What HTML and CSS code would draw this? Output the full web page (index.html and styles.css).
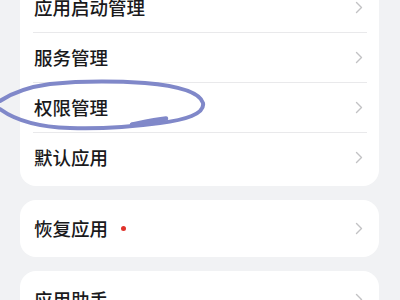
FILE: index.html
```html
<!DOCTYPE html>
<html lang="zh">
<head>
<meta charset="utf-8">
<link rel="stylesheet" href="styles.css">
</head>
<body>
<div class="page">
  <div class="card first">
    <div class="row"><span class="label">应用启动管理</span><svg class="chev" width="8" height="13" viewBox="0 0 8 13"><polyline points="1.5,1.5 6.5,6.5 1.5,11.5" fill="none" stroke="#c2c2c4" stroke-width="1.4" stroke-linecap="round" stroke-linejoin="round"/></svg></div>
    <div class="row"><span class="label">服务管理</span><svg class="chev" width="8" height="13" viewBox="0 0 8 13"><polyline points="1.5,1.5 6.5,6.5 1.5,11.5" fill="none" stroke="#c2c2c4" stroke-width="1.4" stroke-linecap="round" stroke-linejoin="round"/></svg></div>
    <div class="row"><span class="label">权限管理</span><svg class="chev" width="8" height="13" viewBox="0 0 8 13"><polyline points="1.5,1.5 6.5,6.5 1.5,11.5" fill="none" stroke="#c2c2c4" stroke-width="1.4" stroke-linecap="round" stroke-linejoin="round"/></svg></div>
    <div class="row"><span class="label">默认应用</span><svg class="chev" width="8" height="13" viewBox="0 0 8 13"><polyline points="1.5,1.5 6.5,6.5 1.5,11.5" fill="none" stroke="#c2c2c4" stroke-width="1.4" stroke-linecap="round" stroke-linejoin="round"/></svg></div>
  </div>
  <div class="card">
    <div class="row"><span class="label">恢复应用</span><span class="dot"></span><svg class="chev" width="8" height="13" viewBox="0 0 8 13"><polyline points="1.5,1.5 6.5,6.5 1.5,11.5" fill="none" stroke="#c2c2c4" stroke-width="1.4" stroke-linecap="round" stroke-linejoin="round"/></svg></div>
  </div>
  <div class="card">
    <div class="row"><span class="label">应用助手</span><svg class="chev" width="8" height="13" viewBox="0 0 8 13"><polyline points="1.5,1.5 6.5,6.5 1.5,11.5" fill="none" stroke="#c2c2c4" stroke-width="1.4" stroke-linecap="round" stroke-linejoin="round"/></svg></div>
  </div>
</div>
<svg class="mark" width="400" height="300" viewBox="0 0 400 300">
  <path d="M0,101 C12,93 28,87 50,84 C80,81 115,81 145,83 C180,86 200,93 203,103 C205,114 185,120 160,123 C130,127 100,129 70,128 C40,127 15,120 0,109" fill="none" stroke="#8088c9" stroke-width="4" stroke-linecap="round"/>
  <path d="M132,124.5 C144,122 155,119.5 166,118.5" fill="none" stroke="#8088c9" stroke-width="4.5" stroke-linecap="round"/>
</svg>
</body>
</html>
```
FILE: styles.css
```css
html, body {
  margin: 0;
  padding: 0;
  background: #f1f2f4;
  width: 400px;
  height: 300px;
  overflow: hidden;
}
.page {
  padding: 0 21px 0 20px;
  display: flex;
  flex-direction: column;
  gap: 14px;
  font-family: "Noto Sans CJK SC", "Noto Sans", sans-serif;
}
.card {
  background: #ffffff;
  border-radius: 16px;
  padding: 4px 0;
}
.card.first {
  margin-top: -21px;
}
.row {
  height: 49px;
  display: flex;
  align-items: center;
  margin: 0 12px 0 13px;
  padding: 0 4px 0 1px;
  border-top: 1px solid #e9e9eb;
}
.row:first-child {
  border-top: none;
}
.label {
  font-size: 18.5px;
  font-weight: 500;
  color: #1a1a1c;
  line-height: 1;
}
.dot {
  width: 5px;
  height: 5px;
  border-radius: 50%;
  background: #e0332b;
  margin-left: 13px;
}
.chev {
  margin-left: auto;
  display: block;
}
.mark {
  position: absolute;
  top: 0;
  left: 0;
  pointer-events: none;
}
```
